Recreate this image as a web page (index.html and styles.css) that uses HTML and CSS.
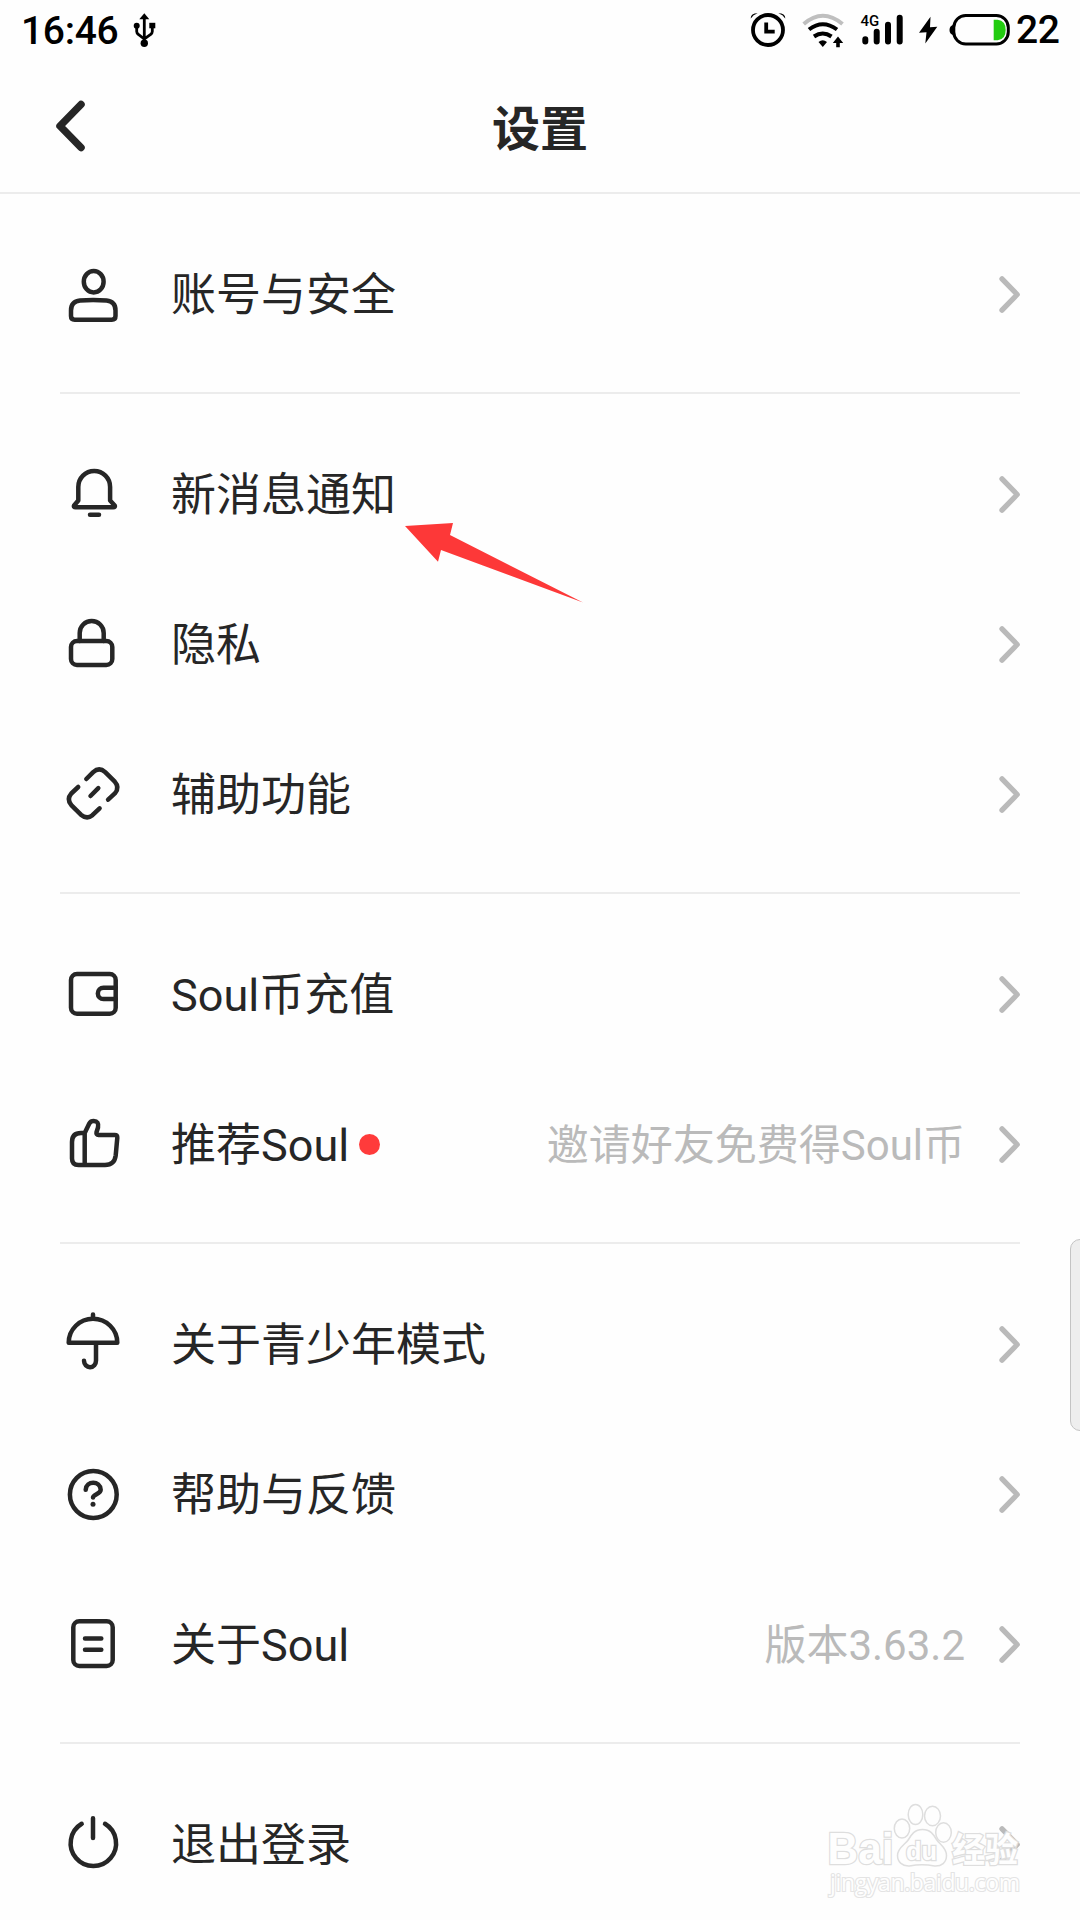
FILE: index.html
```html
<!DOCTYPE html>
<html lang="zh-CN">
<head>
<meta charset="utf-8">
<title>设置</title>
<link rel="stylesheet" href="styles.css">
</head>
<body>
<svg class="defs" width="0" height="0">
  <symbol id="chevron" viewBox="0 0 24 40"><path d="M6 4.800l15.200 15.700L6 36.200"/></symbol>
</svg>
<div class="screen">
  <header class="status">
    <span class="clock">16:46</span>
    <svg class="usb" width="26" height="40" viewBox="0 0 26 40">
      <path class="line" d="M12.300 8V34M4.700 16v5.500q0 2 2 3.200l5.600 4.300 6-4.300q2-1.200 2-3.200V16"/>
      <path d="M12.300 3.300l5 6h-10z"/><circle cx="4.700" cy="15.800" r="3"/><path d="M17.300 12.800h6v5.500h-6z"/><circle cx="12.300" cy="33.300" r="3.700"/>
    </svg>
    <div class="indicators">
      <svg width="36" height="40" viewBox="0 0 36 40">
        <circle class="line alarm" cx="18" cy="20" r="15"/>
        <path class="line alarm" d="M16.200 12.500v9.200h8.500"/>
        <path d="M.8 8.500q-.5-5 6.800-5.200l-4 2zM35.200 8.500q.5-5-6.800-5.200l4 2z"/>
      </svg>
      <svg class="wifi" width="44" height="40" viewBox="0 0 44 40">
        <path class="line faint" d="M1.700 14Q20.700-2.500 40.500 14"/>
        <path class="line" d="M7 19.500Q20.700 9 35 19.500"/>
        <path class="line" d="M12 26.500Q20.700 20.500 29.500 26.500"/>
        <path d="M16.500 32q4.200-3.500 8.500 0l-4.200 5zM36 26.500l5.200 6.500h-3.400v4.300h-3.600V33h-3.400z"/>
      </svg>
      <svg class="signal" width="44" height="40" viewBox="0 0 44 40">
        <text x="0.500" y="15.800">4G</text>
        <path class="line" d="M5.300 29.200v2.300M16.700 21.800v9.700M28 14.800v16.700M39.700 7.800v23.700"/>
      </svg>
      <svg class="bolt" width="20" height="40" viewBox="0 0 20 40"><path d="M12.500 6.700L1 22.700l7.500-.5L7.300 33.500 19.300 16.800l-7.300.5z"/></svg>
      <svg class="battery" width="62" height="40" viewBox="0 0 62 40">
        <path d="M5 15q-3.500 1-3.500 5t3.500 5z"/>
        <rect class="line" x="5.800" y="5.500" width="54.500" height="28.500" rx="12"/>
        <path class="charge" d="M45.700 9.700h4q8 1 8 10.300t-8 10.300h-4z"/>
      </svg>
      <span class="level">22</span>
    </div>
  </header>
  <nav class="titlebar">
    <svg class="back" width="40" height="60" viewBox="0 0 40 60"><path d="M27 8.500L6 30l21 21.500"/></svg>
    <h1>设置</h1>
  </nav>
  <main>
    <section class="group">
      <div class="row">
        <svg class="icon" viewBox="0 0 60 60"><ellipse cx="30.700" cy="17.700" rx="9.900" ry="10.700"/><path d="M8 46.500C8 40 11.500 37.200 17 36.600Q30 35.400 43.500 36.600C49 37.200 52.500 40 52.500 46.500V52q0 3.700-3.700 3.700H11.700Q8 55.700 8 52z"/></svg>
        <span class="label">账号与安全</span><svg class="chevron"><use href="#chevron"/></svg>
      </div>
    </section>
    <section class="group">
      <div class="row">
        <svg class="icon" viewBox="0 0 60 60"><path d="M15.300 23a15.900 16 0 0 1 31.800 0V36.500l4.600 5q.8 1.800-1.500 1.800H12.600q-2.300 0-1.500-1.800l4.200-5zM27 50.700h9"/></svg>
        <span class="label">新消息通知</span><svg class="chevron"><use href="#chevron"/></svg>
      </div>
      <div class="row">
        <svg class="icon" viewBox="0 0 60 60"><rect x="8" y="27" width="41.300" height="24" rx="6"/><path d="M16.700 27v-8a12 12 0 0 1 24 0v8"/></svg>
        <span class="label">隐私</span><svg class="chevron"><use href="#chevron"/></svg>
      </div>
      <div class="row">
        <svg class="icon" viewBox="0 0 60 60"><path d="M23.300 15l6.900-6.900q6-5.500 12 0l9.600 9.600q5 5.500.3 11.500l-7 6.500M15.200 23L8.300 29.500q-5 5.800 0 11.600l9.600 9.600q6 5 11.500.5l7.200-6.900M27.500 32l7.800-7.800"/></svg>
        <span class="label">辅助功能</span><svg class="chevron"><use href="#chevron"/></svg>
      </div>
    </section>
    <section class="group">
      <div class="row">
        <svg class="icon" viewBox="0 0 60 60"><rect x="8" y="10" width="44.700" height="39.700" rx="6"/><path d="M52.700 23.800H40.500a5.600 5.600 0 0 0 0 11.300h12.200"/></svg>
        <span class="label">Soul币充值</span><svg class="chevron"><use href="#chevron"/></svg>
      </div>
      <div class="row">
        <svg class="icon" viewBox="0 0 60 60"><path d="M21.700 19H18q-9 0-9 9v16.500Q9 51 15.500 51H42q9.500 0 10.700-9.500l1.600-17.800q.2-2.800-2.500-2.800H35.500q-2.500 0-2-2.700l1.500-4.700Q36.200 7 30.700 7q-3 0-4.300 2.300L21.700 19v32"/></svg>
        <span class="label">推荐Soul</span><span class="dot"></span><span class="hint">邀请好友免费得Soul币</span><svg class="chevron"><use href="#chevron"/></svg>
      </div>
    </section>
    <section class="group">
      <div class="row">
        <svg class="icon" viewBox="0 0 60 60"><path d="M5.700 28.700a24.300 24 0 0 1 48.600 0zM30 .5V4M33 29v17.500a6 6.500 0 0 1-12 .3"/></svg>
        <span class="label">关于青少年模式</span><svg class="chevron"><use href="#chevron"/></svg>
      </div>
      <div class="row">
        <svg class="icon" viewBox="0 0 60 60"><circle cx="30.300" cy="30.500" r="23.400"/><path d="M22.700 25.800c.5-9.400 14.500-9.400 15 0 0 4.200-7.500 4.500-7.700 7.700"/><circle class="solid" cx="30" cy="40.300" r="2.500"/></svg>
        <span class="label">帮助与反馈</span><svg class="chevron"><use href="#chevron"/></svg>
      </div>
      <div class="row">
        <svg class="icon" viewBox="0 0 60 60"><rect x="10.300" y="7.300" width="39.400" height="44.700" rx="6"/><path d="M22 24.400h16.300M22 35.800h16.300"/></svg>
        <span class="label">关于Soul</span><span class="hint">版本3.63.2</span><svg class="chevron"><use href="#chevron"/></svg>
      </div>
    </section>
    <section class="group">
      <div class="row">
        <svg class="icon" viewBox="0 0 60 60"><path d="M30 4.300V24M18.700 9.800a22.700 22.700 0 1 0 23.300 0"/></svg>
        <span class="label">退出登录</span><svg class="chevron"><use href="#chevron"/></svg>
      </div>
    </section>
  </main>
  <svg class="pointer" width="180" height="82" viewBox="0 0 180 82"><path d="M0 4L48 1 45 13 178 80.500 36 28 33 39.700z"/></svg>
  <div class="handle"></div>
  <svg class="watermark" width="200" height="104" viewBox="0 0 200 104">
    <text class="brand" x="0.500" y="64" textLength="66" lengthAdjust="spacingAndGlyphs">Bai</text>
    <ellipse cx="75" cy="28.500" rx="7.700" ry="9.500"/><ellipse cx="88.500" cy="14.500" rx="7.300" ry="10"/><ellipse cx="105.500" cy="16" rx="8" ry="9.700"/><ellipse cx="116.500" cy="32.500" rx="7.800" ry="9.700"/>
    <path d="M95.500 29.500c8 0 11 5 14 10s10 8 10 16c0 7-5 11-12 10.500-8-1.500-17-1.500-25 0-7 .5-12-4-12-10.500 0-8 8-11 11-16s6-10 14-10z"/>
    <text class="mark" x="79" y="60" textLength="31" lengthAdjust="spacingAndGlyphs">du</text>
    <text class="cjk" x="125" y="62" textLength="66" lengthAdjust="spacingAndGlyphs">经验</text>
    <text class="url" x="3" y="91" textLength="190">jingyan.baidu.com</text>
  </svg>
</div>
</body>
</html>
```
FILE: styles.css
```css
* { box-sizing: border-box; }

body {
  margin: 0;
  background: #fefefe;
  color: #262626;
  font-family: Roboto, "Noto Sans CJK SC", sans-serif;
}

svg { display: block; flex: none; }

.defs { position: absolute; }

.screen {
  position: relative;
  width: 1080px;
  height: 1920px;
  overflow: hidden;
}

.status {
  display: flex;
  align-items: center;
  height: 60px;
  padding: 0 20px;
  color: #000;
  font-size: 39px;
  font-weight: 500;
  line-height: 60px;
}

.status .line {
  fill: none;
  stroke: #000;
  stroke-width: 4;
}

.clock { width: 111px; margin-left: 1px; letter-spacing: -0.3px; padding-top: 1px; }
.usb .line { stroke-width: 2.8; }
.status .alarm { stroke-width: 3.8; }
.wifi .faint { stroke: #bfbfbf; }
.signal { margin-left: -2px; }
.signal .line { stroke-width: 6; stroke-linecap: round; }
.signal text { font-size: 15px; font-weight: 500; }
.bolt { margin-left: -2px; }
.battery { margin-left: -6px; }
.battery .line { stroke-width: 3; }
.battery .charge { fill: #22cc10; }

.indicators {
  display: flex;
  align-items: center;
  gap: 16px;
  margin-left: auto;
}

.level { width: 44px; margin-left: -10px; letter-spacing: -0.3px; }

.titlebar {
  display: grid;
  grid-template-columns: 1fr auto 1fr;
  align-items: center;
  height: 134px;
  padding: 0 54px;
  border-bottom: 2px solid #ececec;
}

.titlebar h1 {
  margin: 0;
  padding-top: 7px;
  font-size: 48px;
  font-weight: 700;
  line-height: 72px;
}

.back {
  fill: none;
  stroke: #262626;
  stroke-width: 7.5;
  stroke-linecap: round;
  stroke-linejoin: round;
}

.group {
  margin: 0 60px;
  padding: 25px 0 23px;
  border-bottom: 2px solid #ececec;
}

.group:last-child { border-bottom: 0; }

.row {
  display: flex;
  align-items: center;
  height: 150px;
  padding-left: 3px;
}

.icon {
  width: 60px;
  height: 60px;
  margin-right: 48px;
  overflow: visible;
  fill: none;
  stroke: #262626;
  stroke-width: 4.5;
  stroke-linecap: round;
  stroke-linejoin: round;
}

.icon .solid { fill: #262626; stroke: none; }

.label { padding-top: 4px; font-size: 45px; line-height: 66px; }

.dot {
  width: 21px;
  height: 21px;
  margin-left: 10px;
  border-radius: 50%;
  background: #ff3b3b;
}

.hint {
  margin-left: auto;
  padding-top: 4px;
  color: #bababa;
  font-size: 42px;
  line-height: 60px;
}

.chevron {
  width: 24px;
  height: 40px;
  margin-left: auto;
  fill: none;
  stroke: #bababa;
  stroke-width: 5.3;
  stroke-linecap: round;
  stroke-linejoin: round;
}

.hint + .chevron { margin-left: 31px; }

.pointer {
  position: absolute;
  left: 405px;
  top: 522px;
  fill: #fd3838;
}

.handle {
  position: absolute;
  left: 1070px;
  top: 1239px;
  width: 20px;
  height: 192px;
  border: 1px solid #c4c4c4;
  border-radius: 12px;
  background: #eee;
}

.watermark {
  position: absolute;
  left: 827px;
  top: 1800px;
  fill: #fefefe;
  stroke: #dedede;
  stroke-width: 1.5;
}

.watermark text { paint-order: stroke; stroke-width: 2.6; }
.watermark .brand { font: 700 45px "Liberation Sans", sans-serif; }
.watermark .mark { font: 700 26px "Liberation Sans", sans-serif; }
.watermark .cjk { font: 700 34px "Noto Sans CJK SC", sans-serif; }
.watermark .url { font: 400 23px "Open Sans", sans-serif; stroke: #e4e4e4; stroke-width: 2.2; }
```
